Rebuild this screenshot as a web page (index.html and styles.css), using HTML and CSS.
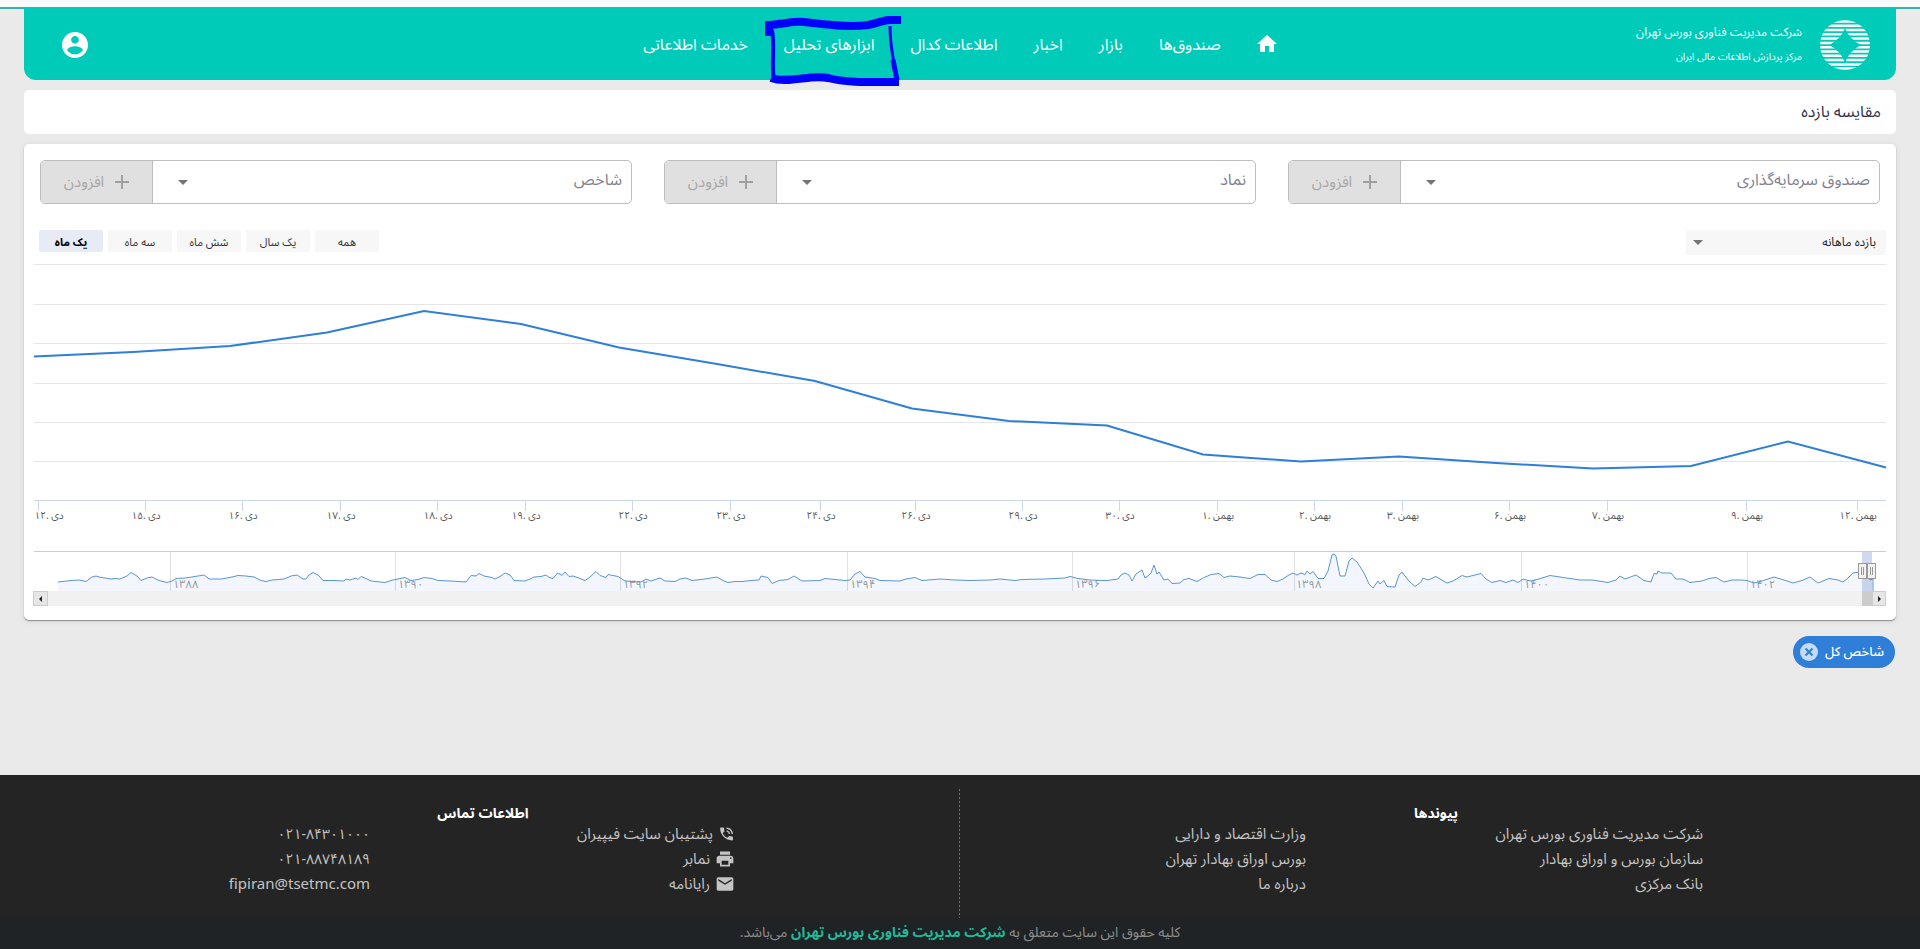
FILE: index.html
```html
<!DOCTYPE html>
<html lang="fa" dir="rtl">
<head>
<meta charset="utf-8">
<title>مقایسه بازده</title>
<link rel="stylesheet" href="styles.css">
</head>
<body>
<div class="top-strip"></div>
<div class="page">
  <header class="header">
    <div class="brand">
      <svg class="brand-logo" viewBox="0 0 50 50" aria-hidden="true">
        <defs><clipPath id="disc"><circle cx="25" cy="25" r="25"/></clipPath></defs>
        <g clip-path="url(#disc)" stroke="#fff" stroke-width="2.5">
          <path d="M0 1.500H50M0 5.700H50M0 10H50M0 14.300H50M0 18.600H50M0 22.900H50M0 27.200H50M0 31.500H50M0 35.800H50M0 40.100H50M0 44.400H50M0 48.600H50"/>
        </g>
        <path fill="#00cab8" d="M25 8Q29 19 41 25Q29 31 25 43Q21 31 9 25Q21 19 25 8Z"/>
      </svg>
      <div class="brand-text">
        <span class="brand-name">شرکت مدیریت فناوری بورس تهران</span>
        <span class="brand-sub">مرکز پردازش اطلاعات مالی ایران</span>
      </div>
    </div>
    <nav class="nav">
      <a href="#" class="nav-home" aria-label="خانه"><svg viewBox="0 0 20 17"><path fill="#fff" d="M8 17v-6h4v6h5V9h3L10 0 0 9h3v8z"/></svg></a>
      <a href="#">صندوق‌ها</a>
      <a href="#">بازار</a>
      <a href="#">اخبار</a>
      <a href="#">اطلاعات کدال</a>
      <a href="#" class="nav-marked">ابزارهای تحلیل
        <svg class="marker" viewBox="0 0 140 72" fill="none" stroke="#0000fd" aria-hidden="true">
          <path stroke-width="8" d="M7 20V9C22 8 30 5 42 6C62 8 84 12 106 9C118 7 122 3 130 4H139"/>
          <path stroke-width="4" d="M10 14C13 30 9 48 12 64"/>
          <path stroke-width="3" d="M128 10C128 34 132 40 134 64"/>
          <path stroke-width="5" d="M131 44L135 64"/>
          <path stroke-width="8" d="M9 62C26 68 50 58 66 62C84 67 110 66 137 66"/>
        </svg>
      </a>
      <a href="#">خدمات اطلاعاتی</a>
    </nav>
    <button class="account" type="button" aria-label="حساب کاربری">
      <svg viewBox="2 2 20 20"><path fill="#fff" d="M12 2C6.480 2 2 6.480 2 12s4.480 10 10 10 10-4.480 10-10S17.520 2 12 2zm0 3c1.660 0 3 1.340 3 3s-1.340 3-3 3-3-1.340-3-3 1.340-3 3-3zm0 14.200c-2.500 0-4.710-1.280-6-3.220.03-1.990 4-3.080 6-3.080 1.990 0 5.970 1.090 6 3.080-1.290 1.940-3.500 3.220-6 3.220z"/></svg>
    </button>
  </header>

  <h1 class="title">مقایسه بازده</h1>

  <main class="panel">
    <div class="pickers">
      <div class="picker">
        <div class="picker-select"><select aria-label="صندوق سرمایه‌گذاری"><option>صندوق سرمایه‌گذاری</option></select><svg class="caret" viewBox="0 0 10 5"><path d="M0 0h10L5 5z"/></svg></div>
        <button type="button" class="add" disabled><svg viewBox="0 0 14 14"><path d="M7 0v14M0 7h14"/></svg>افزودن</button>
      </div>
      <div class="picker">
        <div class="picker-select"><select aria-label="نماد"><option>نماد</option></select><svg class="caret" viewBox="0 0 10 5"><path d="M0 0h10L5 5z"/></svg></div>
        <button type="button" class="add" disabled><svg viewBox="0 0 14 14"><path d="M7 0v14M0 7h14"/></svg>افزودن</button>
      </div>
      <div class="picker">
        <div class="picker-select"><select aria-label="شاخص"><option>شاخص</option></select><svg class="caret" viewBox="0 0 10 5"><path d="M0 0h10L5 5z"/></svg></div>
        <button type="button" class="add" disabled><svg viewBox="0 0 14 14"><path d="M7 0v14M0 7h14"/></svg>افزودن</button>
      </div>
    </div>

    <div class="toolbar">
      <div class="period"><select aria-label="نوع بازده"><option>بازده ماهانه</option></select><svg class="caret" viewBox="0 0 10 5"><path d="M0 0h10L5 5z"/></svg></div>
      <div class="ranges">
        <button type="button">همه</button>
        <button type="button">یک سال</button>
        <button type="button">شش ماه</button>
        <button type="button">سه ماه</button>
        <button type="button" class="active">یک ماه</button>
      </div>
    </div>

    <svg class="chart" viewBox="34 256 1852 352" role="img" aria-label="نمودار بازده">
      <path class="grid" d="M34 264.500H1886M34 304.500H1886M34 343.500H1886M34 383.500H1886M34 422.500H1886M34 461.500H1886"/>
      <path class="axis" d="M34 500.500H1886M38.500 500V511M145.500 500V511M242.500 500V511M340.500 500V511M437.500 500V511M525.500 500V511M632.500 500V511M730.500 500V511M820.500 500V511M915.500 500V511M1022.500 500V511M1119.500 500V511M1217.500 500V511M1314.500 500V511M1402.500 500V511M1509.500 500V511M1607.500 500V511M1746.500 500V511M1857.500 500V511"/>
      <polyline class="series" points="34,356.500 133,352 230,346 327,332.500 424,311 521,324 619,347.500 717,364 815,381 912,408.500 1009,421 1107,425.500 1203,454.500 1301,461.500 1399,456.500 1496,463 1593,468.500 1691,466 1788,441.500 1886,467.500"/>
      <g class="labels">
        <text x="49" y="519">۱۲. دی</text><text x="146" y="519">۱۵. دی</text><text x="243" y="519">۱۶. دی</text><text x="341" y="519">۱۷. دی</text><text x="438" y="519">۱۸. دی</text><text x="526" y="519">۱۹. دی</text><text x="633" y="519">۲۲. دی</text><text x="731" y="519">۲۳. دی</text><text x="821" y="519">۲۴. دی</text><text x="916" y="519">۲۶. دی</text><text x="1023" y="519">۲۹. دی</text><text x="1120" y="519">۳۰. دی</text><text x="1218" y="519">۱. بهمن</text><text x="1315" y="519">۲. بهمن</text><text x="1403" y="519">۳. بهمن</text><text x="1510" y="519">۶. بهمن</text><text x="1608" y="519">۷. بهمن</text><text x="1747" y="519">۹. بهمن</text><text x="1858" y="519">۱۲. بهمن</text>
      </g>
      <path class="nav-grid" d="M170.500 551V591M395.500 551V591M620.500 551V591M847.500 551V591M1072.500 551V591M1294.500 551V591M1521.500 551V591M1747.500 551V591"/>
      <g class="years">
        <text x="173" y="588">۱۳۸۸</text><text x="398" y="588">۱۳۹۰</text><text x="623" y="588">۱۳۹۲</text><text x="850" y="588">۱۳۹۴</text><text x="1075" y="588">۱۳۹۶</text><text x="1296" y="588">۱۳۹۸</text><text x="1524" y="588">۱۴۰۰</text><text x="1750" y="588">۱۴۰۲</text>
      </g>
      <path class="nav-area" d="M58 591V582L71 580.500 79 580 86 581.500 92 577 96 576 99 577 111 579 115 578.500 120 579 127 576 131 572.500 137 576 141 580.500 147 578 152 577 159 580.500 167 582.500 172 581 176 578.500 185 578 195 576.500 204 575 209 579 222 579 232 577 238 575.500 246 576 254 577 261 580.500 266 581.500 272 580 284 579 291 576 297 575 303 579 306 579 309 575 313 572.500 318 575 323 580.500 332 580.500 344 581 346 579 350 580 356 578 358 579.500 361 576.500 367 579 371 581 385 582.500 393 580 398 579 405 577.500 411 580.500 418 579.500 424 577.500 432 578.500 438 580.500 451 581 466 582 469 578 471 575.500 476 576 479 573.500 484 576 492 577.500 495 579 500 576.500 505 573 510 575 514 580.500 525 581 530 579 534 577 541 576.500 546 575 549 577.500 553 578.500 557 573.500 560 574 562 575.500 565 572 569 576.500 573 576 579 578 585 580.500 590 577 596 571.500 600 575.500 606 577.500 608 574.500 618 576.500 625 581 634 581.500 641 582 646 579 651 581 660 578 665 581 675 581.500 680 579 686 578 692 580.500 705 579 717 577 723 580.500 728 582.500 735 581.500 742 581.500 751 580.500 759 580 761 576 768 577.500 772 583.500 779 580.500 788 579.500 794 576 802 581 820 580.500 825 578.500 845 580.500 850 580 855 574 860 571.500 865 577 875 578.500 880 580.500 900 581 906 579 915 577.500 922 580.500 940 579 955 580 970 580.500 990 580 1000 579 1015 580.500 1022 579.500 1045 579 1065 578 1070 576.500 1078 578.500 1090 580 1102 580.500 1107 580.500 1118 579 1121 575 1125 573 1129 575 1132 581 1136 574 1142 570 1145 578 1149 575 1151 573 1154 565 1157 574 1159 572 1164 580 1168 579 1172 583.500 1180 583 1184 579.500 1189 578.500 1197 581.500 1203 578 1211 574.500 1219 573.500 1224 577.500 1230 576 1240 577 1250 578.500 1258 574.500 1265 574.500 1271 580 1277 581.500 1283 579 1288 575.500 1293 573 1297 575 1301 573 1305 574.500 1307 571 1310 574 1313 571.500 1318 578.500 1324 578.500 1328 571 1332 555 1334 554 1336 556 1340 576 1345 576 1349 561 1352 558 1357 562 1364 573 1369 584 1373 588 1378 581 1380 584 1384 580.500 1387 586.500 1395 587 1399 575 1402 572 1405 576 1409 581 1415 586.500 1421 582 1423 578 1428 580 1436 576.500 1440 579 1447 583 1453 581 1462 575.500 1467 577 1475 575 1481 573.500 1486 579 1492 582.500 1500 580.500 1506 582.500 1513 580 1518 582.500 1523 579 1530 581 1537 579.500 1550 575.500 1560 577 1570 578.500 1580 580 1592 580 1608 582.500 1616 580 1620 576 1625 579 1636 575 1644 580.500 1651 582 1654 573.500 1657 574 1658 571 1662 573 1671 573 1676 579 1683 579 1690 582.500 1702 581 1709 578.500 1716 577.500 1724 582 1732 580 1741 580 1747 580.500 1754 583 1762 581 1774 577 1784 580 1793 583 1802 580.500 1810 577 1818 583 1829 578.500 1838 580 1843 582 1848 578 1853 573 1860 572 1866 572 1870 580 1873 579V591"/>
      <rect class="nav-mask" x="1862" y="551" width="10" height="40"/>
      <path class="nav-outline" d="M34 551.500H1886"/>
      <rect class="scroll-track" x="34" y="591" width="1852" height="15"/>
      <rect class="scroll-thumb" x="1862" y="591" width="10" height="15"/>
      <g class="scroll-button">
        <rect x="33.500" y="591.500" width="14" height="14"/><rect x="1872.500" y="591.500" width="13" height="14"/>
      </g>
      <path fill="#222" d="M42 596v6l-3-3zM1878 596v6l3-3z"/>
      <g class="handle">
        <rect x="1858.500" y="563.500" width="8" height="15"/><rect x="1867.500" y="563.500" width="8" height="15"/>
        <path d="M1861.500 567V575M1863.500 567V575M1870.500 567V575M1872.500 567V575"/>
      </g>
    </svg>
  </main>

  <div class="chips">
    <button type="button" class="chip">شاخص کل
      <svg viewBox="0 0 18 18"><circle cx="9" cy="9" r="9" fill="#c5dbf4"/><path d="M5.500 5.500l7 7M12.500 5.500l-7 7" stroke="#2f7ed8" stroke-width="2"/></svg>
    </button>
  </div>
</div>

<footer class="footer">
  <div class="footer-main">
    <section class="footer-half">
      <h2>پیوندها</h2>
      <div class="footer-cols links">
        <ul class="col-a"><li><a href="#">شرکت مدیریت فناوری بورس تهران</a></li><li><a href="#">سازمان بورس و اوراق بهادار</a></li><li><a href="#">بانک مرکزی</a></li></ul>
        <ul class="col-b"><li><a href="#">وزارت اقتصاد و دارایی</a></li><li><a href="#">بورس اوراق بهادار تهران</a></li><li><a href="#">درباره ما</a></li></ul>
      </div>
    </section>
    <div class="divider"></div>
    <section class="footer-half">
      <h2>اطلاعات تماس</h2>
      <div class="footer-cols contact">
        <ul class="col-a">
          <li><svg viewBox="0 0 24 24"><path d="M20 15.500c-1.250 0-2.450-.2-3.570-.57-.35-.11-.74-.03-1.020.24l-2.200 2.200c-2.830-1.440-5.150-3.750-6.590-6.590l2.200-2.210c.28-.26.36-.65.25-1C8.700 6.450 8.500 5.250 8.500 4c0-.55-.45-1-1-1H4c-.55 0-1 .45-1 1 0 9.390 7.610 17 17 17 .55 0 1-.45 1-1v-3.500c0-.55-.45-1-1-1zM19 12h2c0-4.970-4.030-9-9-9v2c3.870 0 7 3.130 7 7zm-4 0h2c0-2.760-2.240-5-5-5v2c1.660 0 3 1.340 3 3z"/></svg>پشتیبان سایت فیپیران</li>
          <li><svg viewBox="0 0 24 24"><path d="M19 8H5c-1.660 0-3 1.340-3 3v6h4v4h12v-4h4v-6c0-1.660-1.340-3-3-3zm-3 11H8v-5h8v5zm3-7c-.55 0-1-.45-1-1s.45-1 1-1 1 .45 1 1-.45 1-1 1zm-1-9H6v4h12V3z"/></svg>نمابر</li>
          <li><svg viewBox="0 0 24 24"><path d="M20 4H4c-1.100 0-2 .9-2 2v12c0 1.100.9 2 2 2h16c1.100 0 2-.9 2-2V6c0-1.100-.9-2-2-2zm0 4l-8 5-8-5V6l8 5 8-5v2z"/></svg>رایانامه</li>
        </ul>
        <ul class="col-b"><li><bdi class="phone" dir="ltr">۰۲۱-۸۴۳۰۱۰۰۰</bdi></li><li><bdi class="phone" dir="ltr">۰۲۱-۸۸۷۴۸۱۸۹</bdi></li><li><bdi dir="ltr">fipiran@tsetmc.com</bdi></li></ul>
      </div>
    </section>
  </div>
  <p class="copyright">کلیه حقوق این سایت متعلق به <a href="#">شرکت مدیریت فناوری بورس تهران</a> می‌باشد.</p>
</footer>
</body>
</html>
```
FILE: styles.css
```css
* { box-sizing: border-box; }
body {
  margin: 0;
  min-height: 100vh;
  display: flex;
  flex-direction: column;
  background: #eaeaea;
  color: #32324a;
  font-family: "Noto Sans", "Noto Sans Arabic", "DejaVu Sans", sans-serif;
  font-size: 14px;
}
a { color: inherit; text-decoration: none; }
button, select { font: inherit; color: inherit; margin: 0; cursor: pointer; }
ul, h1, h2, p { margin: 0; padding: 0; font-weight: normal; }
ul { list-style: none; }

.top-strip { height: 9px; background: #f9fafc; border-bottom: 2px solid #35b3aa; }
.page { flex: 1; padding: 0 24px; }

.header {
  display: grid;
  grid-template-columns: 1fr auto 1fr;
  align-items: center;
  height: 73px;
  margin-top: -2px;
  padding: 2px 26px 0;
  background: #00cab8;
  border-radius: 0 0 12px 12px;
  color: #fff;
}
.brand { display: flex; align-items: center; gap: 18px; }
.brand-logo { width: 50px; height: 50px; }
.brand-text { display: flex; flex-direction: column; gap: 4px; padding-bottom: 2px; white-space: nowrap; line-height: 20px; }
.brand-name { font-size: 12px; }
.brand-sub { font-size: 10px; }
.nav { display: flex; align-items: center; gap: 36px; padding-bottom: 2px; white-space: nowrap; font-size: 16px; line-height: 24px; }
.nav-home svg { display: block; width: 20px; height: 17px; }
.nav-marked { position: relative; }
.marker { position: absolute; left: -22px; top: -16px; width: 140px; height: 72px; pointer-events: none; }
.account { justify-self: end; width: 26px; height: 26px; margin-left: 12px; padding: 0; border: 0; background: none; }
.account svg { display: block; }

.title {
  height: 44px;
  margin-top: 10px;
  padding: 0 15px;
  background: #fff;
  border-radius: 5px;
  font-size: 16px;
  line-height: 42px;
}
.panel {
  margin-top: 10px;
  padding: 16px 10px 12px;
  background: #fff;
  border-radius: 5px;
  box-shadow: 0 1px 1px #8c8c8c, 0 1px 5px #cfcfcf;
}
.pickers { display: grid; grid-template-columns: repeat(3, 1fr); gap: 32px; padding: 0 6px; }
.picker { display: flex; height: 44px; border: 1px solid #bdbdbd; border-radius: 5px; overflow: hidden; }
.picker-select { position: relative; flex: 1; }
.picker-select select {
  appearance: none;
  width: 100%;
  height: 36px;
  padding: 0 9px;
  border: 0;
  background: none;
  color: #82828f;
  font-size: 16px;
}
.caret { position: absolute; top: 19px; left: 25px; width: 10px; height: 5px; fill: #757575; pointer-events: none; }
.add {
  display: flex;
  align-items: center;
  justify-content: center;
  gap: 11px;
  width: 112px;
  padding: 0 8px;
  border: 0;
  border-right: 1px solid #bdbdbd;
  background: #e0e0e0;
  color: #a6a6a6;
  font-size: 15px;
}
.add svg { width: 14px; height: 14px; stroke: #a0a0a0; stroke-width: 2; }

.toolbar { display: flex; justify-content: space-between; align-items: flex-start; margin-top: 26px; padding-left: 5px; }
.period { position: relative; width: 200px; height: 25px; background: #f7f7f7; }
.period select { appearance: none; width: 100%; height: 23px; padding: 0 10px; border: 0; background: none; color: #222; font-size: 12px; }
.period .caret { top: 10px; left: 7px; }
.ranges { display: flex; gap: 5px; }
.ranges button { width: 64px; height: 22px; padding: 0; border: 0; border-radius: 2px; background: #f7f7f7; color: #333; font-size: 11px; line-height: 24px; }
.ranges .active { background: #e6ebf5; color: #000; font-weight: bold; }

.chart { display: block; width: 100%; height: auto; margin-top: 1px; direction: ltr; fill: none; overflow: visible; }
.grid { stroke: #e6e6e6; }
.nav-grid { stroke: #e0e0e0; }
.axis { stroke: #ccd6eb; }
.series { stroke: #2f7ed8; stroke-width: 2; }
.labels text { fill: #555; font-size: 10px; text-anchor: middle; }
.years text { fill: #999; font-size: 11px; }
/* the first dash gap hides the left edge of the filled area */
.nav-area { fill: #2f7ed8; fill-opacity: 0.06; stroke: #5a94d8; stroke-dasharray: 0 9 9999; }
.nav-outline { stroke: #ccc; }
.nav-mask { fill: #6685c2; fill-opacity: 0.3; }
.scroll-track { fill: #f1f1f1; }
.scroll-thumb { fill: #ccc; }
.scroll-button rect { fill: #e6e6e6; stroke: #ccc; }
.handle rect { fill: #f2f2f2; stroke: #999; }
.handle path { stroke: #999; }

.chips { display: flex; margin: 16px 1px 0; }
.chip {
  display: flex;
  align-items: center;
  gap: 7px;
  height: 32px;
  padding: 0 11px 0 7px;
  border: 0;
  border-radius: 16px;
  background: #2f7ed8;
  color: #fff;
  font-size: 13px;
  font-weight: 500;
}
.chip svg { width: 18px; height: 18px; }

.footer { background: #242424; color: #c4c4c4; }
.footer-main { display: grid; grid-template-columns: 1fr 1px 1fr; padding: 14px 8px 0 7px; }
.footer-half { height: 129px; padding-top: 12px; }
.divider { background: repeating-linear-gradient(#4f8275 0 2px, transparent 2px 4px); }
.footer h2 { color: #fff; font-size: 14px; font-weight: bold; line-height: 24px; text-align: center; }
.footer-cols { display: flex; justify-content: center; white-space: nowrap; font-size: 15px; line-height: 25px; margin-top: -4px; }
.footer li { display: flex; align-items: center; gap: 5px; height: 25px; }
.footer li svg { width: 20px; height: 20px; fill: #c4c4c4; }
.phone { font-size: 14px; }
.links { gap: 192px; }
.links .col-a { width: 205px; }
.links .col-b { width: 137px; }
.contact { gap: 207px; }
.contact .col-a { width: 158px; }
.contact .col-b { width: 139px; }
.copyright { height: 31px; background: #202326; color: #8e8e8e; line-height: 28px; text-align: center; }
.copyright a { color: #1fba9b; font-weight: bold; }
```
